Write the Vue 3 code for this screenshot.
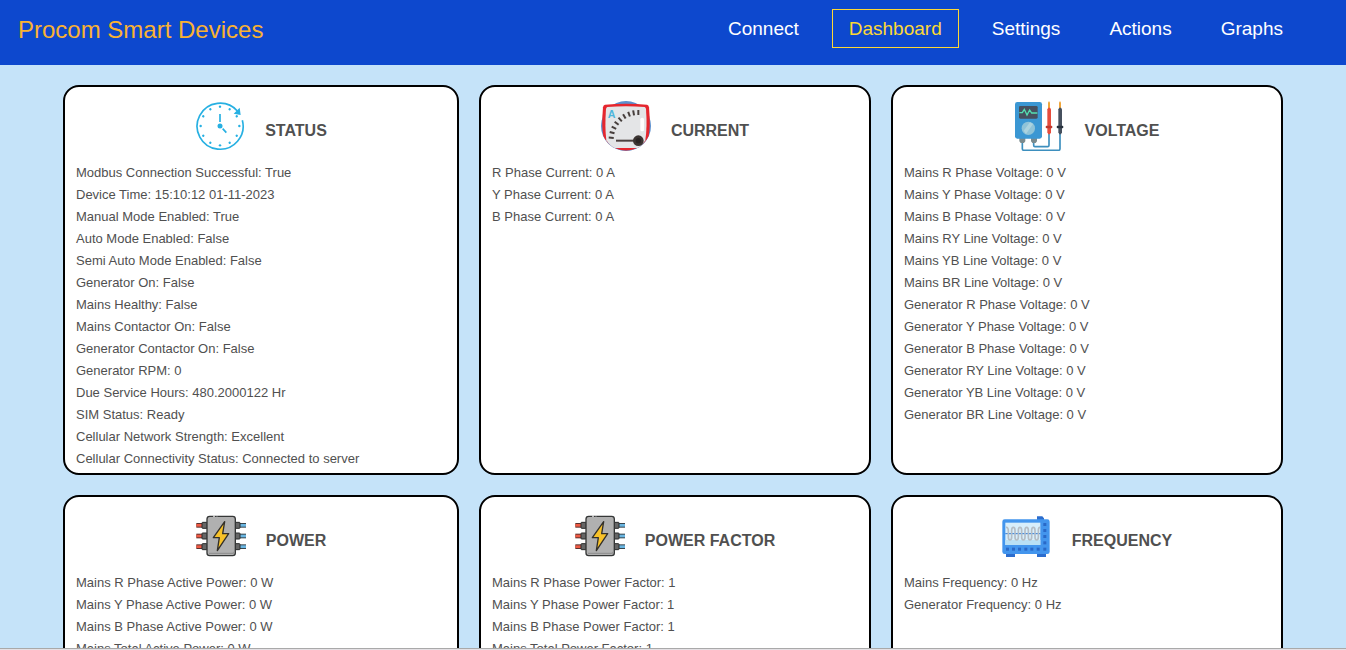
<script setup>
const links = ['Connect', 'Dashboard', 'Settings', 'Actions', 'Graphs']
const active = 'Dashboard'

const cards = [
  {
    title: 'STATUS',
    icon: 'clock',
    rows: [
      ['Modbus Connection Successful', 'True'],
      ['Device Time', '15:10:12 01-11-2023'],
      ['Manual Mode Enabled', 'True'],
      ['Auto Mode Enabled', 'False'],
      ['Semi Auto Mode Enabled', 'False'],
      ['Generator On', 'False'],
      ['Mains Healthy', 'False'],
      ['Mains Contactor On', 'False'],
      ['Generator Contactor On', 'False'],
      ['Generator RPM', '0'],
      ['Due Service Hours', '480.2000122 Hr'],
      ['SIM Status', 'Ready'],
      ['Cellular Network Strength', 'Excellent'],
      ['Cellular Connectivity Status', 'Connected to server'],
    ],
  },
  {
    title: 'CURRENT',
    icon: 'ammeter',
    rows: [
      ['R Phase Current', '0 A'],
      ['Y Phase Current', '0 A'],
      ['B Phase Current', '0 A'],
    ],
  },
  {
    title: 'VOLTAGE',
    icon: 'multimeter',
    rows: [
      ['Mains R Phase Voltage', '0 V'],
      ['Mains Y Phase Voltage', '0 V'],
      ['Mains B Phase Voltage', '0 V'],
      ['Mains RY Line Voltage', '0 V'],
      ['Mains YB Line Voltage', '0 V'],
      ['Mains BR Line Voltage', '0 V'],
      ['Generator R Phase Voltage', '0 V'],
      ['Generator Y Phase Voltage', '0 V'],
      ['Generator B Phase Voltage', '0 V'],
      ['Generator RY Line Voltage', '0 V'],
      ['Generator YB Line Voltage', '0 V'],
      ['Generator BR Line Voltage', '0 V'],
    ],
  },
  {
    title: 'POWER',
    icon: 'power',
    rows: [
      ['Mains R Phase Active Power', '0 W'],
      ['Mains Y Phase Active Power', '0 W'],
      ['Mains B Phase Active Power', '0 W'],
      ['Mains Total Active Power', '0 W'],
    ],
  },
  {
    title: 'POWER FACTOR',
    icon: 'power',
    rows: [
      ['Mains R Phase Power Factor', '1'],
      ['Mains Y Phase Power Factor', '1'],
      ['Mains B Phase Power Factor', '1'],
      ['Mains Total Power Factor', '1'],
    ],
  },
  {
    title: 'FREQUENCY',
    icon: 'scope',
    rows: [
      ['Mains Frequency', '0 Hz'],
      ['Generator Frequency', '0 Hz'],
    ],
  },
]

const hourAngles = [0, 30, 60, 90, 120, 150, 180, 210, 240, 270, 300, 330]
const gaugeAngles = [-86, -75, -64, -53, -42, -31, -20, -10, 0]
</script>

<template>
  <div class="page">
    <header class="bar">
      <a class="brand" href="#">Procom Smart Devices</a>
      <nav class="nav">
        <a v-for="l in links" :key="l" href="#" :class="['link', { active: l === active }]">{{ l }}</a>
      </nav>
    </header>

    <main class="grid">
      <section v-for="c in cards" :key="c.title" class="card">
        <div class="head">
          <svg v-if="c.icon === 'clock'" class="icon" viewBox="30 33 150 150" aria-hidden="true">
            <path d="M172 91 A69 69 0 1 1 157 63" fill="none" stroke="#27b0e2" stroke-width="5" />
            <path d="M146 71 L167 75 L164 53 Z" fill="#27b0e2" />
            <g fill="#27b0e2">
              <circle v-for="a in hourAngles" :key="a" cx="105" cy="50" r="3.6" :transform="`rotate(${a} 105 108)`" />
              <circle cx="105" cy="108" r="7.5" />
            </g>
            <path d="M105 72 V96 M113 116 L124 128" stroke="#27b0e2" stroke-width="5" />
          </svg>

          <svg v-else-if="c.icon === 'ammeter'" class="icon" viewBox="33 33 150 150" aria-hidden="true">
            <circle cx="108" cy="108" r="75" fill="#5b8fce" />
            <path d="M45 44 Q108 38 171 44 Q176 45 177 52 Q182 108 176 138 A75 75 0 0 1 40 138 Q34 108 39 52 Q40 45 45 44Z" fill="#e5262e" />
            <path d="M52 51 Q108 47 164 51 Q167 52 168 57 Q172 112 166 151 Q154 170 142 174 H74 Q60 168 49 151 Q44 112 48 57 Q49 52 52 51Z" fill="#e4e5e7" />
            <text x="65" y="84" class="unit" text-anchor="middle">A</text>
            <path v-for="a in gaugeAngles" :key="a" d="M145 60 V75" stroke="#473f3d" stroke-width="6" :transform="`rotate(${a} 145 149)`" />
            <rect x="151" y="83" width="11" height="41" rx="5" fill="#fff" />
            <path d="M78 152 H140" stroke="#4a403e" stroke-width="6" />
            <circle cx="145" cy="152" r="16" fill="#3b3432" />
            <circle cx="145" cy="152" r="8" fill="#292423" />
          </svg>

          <svg v-else-if="c.icon === 'multimeter'" class="icon" viewBox="45 33 150 150" aria-hidden="true">
            <path d="M67 155 V176 Q67 181 72 181 H175 Q180 181 180 176 V130 M101 155 V166 Q101 170 105 170 H143 Q147 170 147 166 V130" fill="none" stroke="#3d8fbe" stroke-width="5" />
            <path d="M58 144 H76 V154 L72 159 H62 L58 154Z M93 144 H111 V154 L107 159 H97 L93 154Z" fill="#7b8b8e" />
            <rect x="45" y="36" width="81" height="110" rx="7" fill="#3b97d3" />
            <rect x="57" y="48" width="56" height="38" rx="4" fill="#46505e" />
            <path d="M58 68 H67 L73 58 L81 75 L89 60 L95 69 H112" fill="none" stroke="#55dfb1" stroke-width="4" />
            <circle cx="85" cy="115" r="20" fill="#8fc3d8" />
            <path d="M71 122 L90 97 L99 102 L78 132Z" fill="#acd3df" />
            <path d="M144 55 V38 L147 33 L150 38 V55Z M177 55 V38 L180 33 L183 38 V55Z" fill="#f0a63b" />
            <path d="M142 58 L145 53 H150 L153 58 V127 L150 133 H145 L142 127Z" fill="#e64c3c" />
            <rect x="137" y="107" width="20" height="8" rx="3" fill="#bd392f" />
            <path d="M175 58 L178 53 H183 L186 58 V127 L183 133 H178 L175 127Z" fill="#46505e" />
            <rect x="170" y="107" width="20" height="8" rx="3" fill="#29323e" />
          </svg>

          <svg v-else-if="c.icon === 'power'" class="icon" viewBox="33 18 150 150" aria-hidden="true">
            <g v-for="y in [61, 93, 125]" :key="y">
              <rect x="34" :y="y - 7" width="20" height="14" fill="#5a302e" />
              <rect x="34" :y="y - 4" width="18" height="8" fill="#ef5b45" />
              <rect x="163" :y="y - 7" width="20" height="14" fill="#38454d" />
              <rect x="165" :y="y - 4" width="18" height="8" fill="#6ab6e2" />
              <rect x="51" :y="y - 9" width="16" height="18" rx="2" fill="#666" stroke="#292b2b" stroke-width="3" />
              <rect x="150" :y="y - 9" width="15" height="18" rx="2" fill="#666" stroke="#292b2b" stroke-width="3" />
            </g>
            <rect x="66" y="34" width="85" height="118" rx="8" fill="#b0b0b0" stroke="#353737" stroke-width="4" />
            <path d="M72 145 H143 Q147 145 147 140" fill="none" stroke="#929292" stroke-width="4" />
            <path d="M84 33 H90 M95 33 H97" stroke="#ddd" stroke-width="4" />
            <path d="M119 50 L85 98 H103 L97 137 L131 86 H113 Z" fill="#f8c229" stroke="#33302a" stroke-width="4" stroke-linejoin="round" />
          </svg>

          <svg v-else class="icon" viewBox="36 18 150 150" aria-hidden="true">
            <path d="M141 45 V34 H157 L162 40 V45Z M48 145 H75 V156 H48Z M141 145 H168 V156 H141Z" fill="#2c6dce" />
            <rect x="37" y="43" width="142" height="104" rx="7" fill="#4395ed" />
            <rect x="46" y="53" width="105" height="67" fill="#d8eefb" />
            <rect x="46" y="105" width="105" height="15" fill="#b9e0f5" />
            <path d="M46 86 H151" stroke="#2f79d6" stroke-width="3" />
            <path d="M48 67 Q55 66 55 78 V96 Q55 105 60 105 Q65 105 65 96 V76 Q65 67 70 67 Q75 67 75 76 V96 Q75 105 80 105 Q85 105 85 96 V76 Q85 67 90 67 Q95 67 95 76 V96 Q95 105 100 105 Q105 105 105 96 V76 Q105 67 110 67 Q115 67 115 76 V96 Q115 105 120 105 Q125 105 125 96 V76 Q125 67 130 67 Q135 67 135 76 V96 Q135 105 140 105 Q145 105 145 96 V76 Q145 67 150 67" fill="none" stroke="#b5bdc5" stroke-width="5" />
            <g fill="#2969c8">
              <rect v-for="y in [54, 72, 90, 109, 128]" :key="y" x="160" :y="y" width="9" height="9" />
              <rect v-for="x in [48, 66, 84, 103, 121, 140]" :key="x" :x="x" y="128" width="9" height="9" />
            </g>
          </svg>
          <h2 class="title">{{ c.title }}</h2>
        </div>
        <ul class="rows">
          <li v-for="r in c.rows" :key="r[0]">{{ r[0] }}: {{ r[1] }}</li>
        </ul>
      </section>
    </main>
    <footer class="edge"></footer>
  </div>
</template>

<style>
body {
  background: #c5e3f9;
}
</style>

<style scoped>
.page {
  height: 100vh;
  display: flex;
  flex-direction: column;
  overflow: hidden;
  font-family: "Liberation Sans", Arial, sans-serif;
  background: #c5e3f9;
}
.bar {
  flex: none;
  display: flex;
  align-items: flex-start;
  justify-content: space-between;
  padding: 9px 47px 17px 16px;
  background: #0d48ce;
}
.brand {
  font-size: 24px;
  line-height: 28px;
  padding: 7px 0 4px 2px;
  color: #f9b233;
  text-decoration: none;
}
.nav {
  display: flex;
  gap: 17px;
}
.link {
  padding: 8px 16px;
  border: solid transparent;
  border-width: 1px 0;
  font-size: 19px;
  line-height: 21px;
  color: #fff;
  text-decoration: none;
}
.link.active {
  color: #fdd835;
  border: 1px solid #fdd835;
}
.grid {
  flex: 1;
  min-height: 0;
  overflow: hidden;
  display: grid;
  grid-template-columns: 99fr 98fr 98fr;
  grid-auto-rows: max-content;
  gap: 20px;
  padding: 20px 63px;
}
.card {
  box-sizing: border-box;
  min-height: 390px;
  padding: 14px 11px 3px;
  border: 2px solid #000;
  border-radius: 16px;
  background: #fff;
  color: #505050;
}
.head {
  display: flex;
  align-items: center;
  justify-content: center;
  gap: 20px;
  margin-bottom: 11px;
}
.icon {
  flex: none;
  width: 50px;
  height: 50px;
}
.unit {
  font-size: 32px;
  font-weight: 700;
  fill: #4db5dc;
}
.title {
  margin: 0;
  padding-top: 10px;
  font-size: 16px;
  line-height: 20px;
  font-weight: 700;
}
.rows {
  margin: 0;
  padding: 0;
  list-style: none;
  font-size: 13px;
  line-height: 22px;
}
.edge {
  flex: none;
  height: 1px;
  border-top: 1px solid #a9a9a9;
  background: #e4e0e4;
}
</style>
